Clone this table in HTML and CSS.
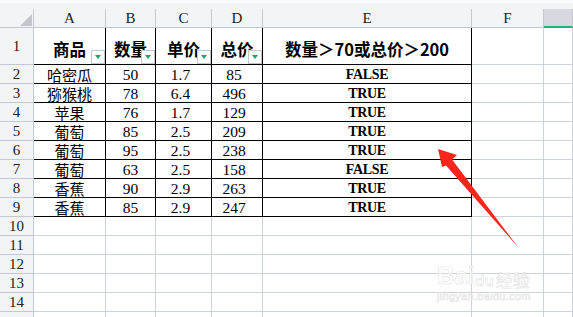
FILE: index.html
```html
<!DOCTYPE html>
<html>
<head>
<meta charset="utf-8">
<link rel="stylesheet" href="styles.css">
</head>
<body>
<div class="sheet">
  <div class="topbar"><div class="topsel"></div></div>
  <div class="grid">
    <div class="c hd corner"><span class="tri"></span></div>
    <div class="c hd col">A</div>
    <div class="c hd col">B</div>
    <div class="c hd col">C</div>
    <div class="c hd col">D</div>
    <div class="c hd col">E</div>
    <div class="c hd col">F</div>
    <div class="c hd col sel"></div>

    <div class="c hd row">1</div>
    <div class="c t th">商品<span class="flt"></span></div>
    <div class="c t th">数量<span class="flt"></span></div>
    <div class="c t th">单价<span class="flt"></span></div>
    <div class="c t th">总价<span class="flt"></span></div>
    <div class="c t th">数量＞70或总价＞200</div>
    <div class="c"></div>
    <div class="c"></div>

    <div class="c hd row">2</div>
    <div class="c t zh">哈密瓜</div><div class="c t num">50</div><div class="c t num off">1.7</div><div class="c t num off">85</div><div class="c t bool">FALSE</div><div class="c"></div><div class="c"></div>
    <div class="c hd row">3</div>
    <div class="c t zh">猕猴桃</div><div class="c t num">78</div><div class="c t num off">6.4</div><div class="c t num off">496</div><div class="c t bool">TRUE</div><div class="c"></div><div class="c"></div>
    <div class="c hd row">4</div>
    <div class="c t zh">苹果</div><div class="c t num">76</div><div class="c t num off">1.7</div><div class="c t num off">129</div><div class="c t bool">TRUE</div><div class="c"></div><div class="c"></div>
    <div class="c hd row">5</div>
    <div class="c t zh">葡萄</div><div class="c t num">85</div><div class="c t num off">2.5</div><div class="c t num off">209</div><div class="c t bool">TRUE</div><div class="c"></div><div class="c"></div>
    <div class="c hd row">6</div>
    <div class="c t zh">葡萄</div><div class="c t num">95</div><div class="c t num off">2.5</div><div class="c t num off">238</div><div class="c t bool">TRUE</div><div class="c"></div><div class="c"></div>
    <div class="c hd row">7</div>
    <div class="c t zh">葡萄</div><div class="c t num">63</div><div class="c t num off">2.5</div><div class="c t num off">158</div><div class="c t bool">FALSE</div><div class="c"></div><div class="c"></div>
    <div class="c hd row">8</div>
    <div class="c t zh">香蕉</div><div class="c t num">90</div><div class="c t num off">2.9</div><div class="c t num off">263</div><div class="c t bool">TRUE</div><div class="c"></div><div class="c"></div>
    <div class="c hd row">9</div>
    <div class="c t zh">香蕉</div><div class="c t num">85</div><div class="c t num off">2.9</div><div class="c t num off">247</div><div class="c t bool">TRUE</div><div class="c"></div><div class="c"></div>

    <div class="c hd row">10</div><div class="c"></div><div class="c"></div><div class="c"></div><div class="c"></div><div class="c"></div><div class="c"></div><div class="c"></div>
    <div class="c hd row">11</div><div class="c"></div><div class="c"></div><div class="c"></div><div class="c"></div><div class="c"></div><div class="c"></div><div class="c"></div>
    <div class="c hd row">12</div><div class="c"></div><div class="c"></div><div class="c"></div><div class="c"></div><div class="c"></div><div class="c"></div><div class="c"></div>
    <div class="c hd row">13</div><div class="c"></div><div class="c"></div><div class="c"></div><div class="c"></div><div class="c"></div><div class="c"></div><div class="c"></div>
    <div class="c hd row">14</div><div class="c"></div><div class="c"></div><div class="c"></div><div class="c"></div><div class="c"></div><div class="c"></div><div class="c"></div>
    <div class="c hd row"></div><div class="c"></div><div class="c"></div><div class="c"></div><div class="c"></div><div class="c"></div><div class="c"></div><div class="c"></div>
  </div>

  <svg class="arrow" width="573" height="317" viewBox="0 0 573 317">
    <polygon points="438,149 457,155 452,159.5 518,247 446,165.5 442,167" fill="#f7261b"/>
  </svg>

  <div class="wm">
    <div class="wm-top"><span class="wm-bai">Bai</span><span class="wm-du">du</span><span class="wm-jy">经验</span></div>
    <div class="wm-url">jingyan.baidu.com</div>
  </div>
</div>
</body>
</html>
```

FILE: styles.css
```css
* { box-sizing: border-box; }
html, body { margin: 0; padding: 0; }
body { width: 573px; height: 317px; overflow: hidden; background: #fff; }

.sheet { position: relative; width: 573px; height: 317px; overflow: hidden; }

.topbar {
  height: 9px;
  background: #f3f4f6;
  border-top: 3px solid #fbfbfc;
  display: flex;
  justify-content: flex-end;
}
.topsel { width: 29px; }

.grid {
  display: grid;
  grid-template-columns: 34px 72px 50px 56px 51px 209px 72px 1fr;
  grid-template-rows: 19px 37px repeat(13, 19px) 19px;
}

.c {
  border-right: 1px solid #cdd1da;
  border-bottom: 1px solid #cdd1da;
  display: flex;
  align-items: center;
  justify-content: center;
  white-space: nowrap;
  color: #000;
  position: relative;
}

.hd {
  background: #f3f4f6;
  border-color: #c3c8d3;
  color: #222;
  font-family: "Liberation Serif", serif;
  font-size: 15px;
}
.col { padding-top: 1px; }
.sel { background: #d6d9df; border-bottom: 2px solid #1fb27a; }
.row { padding-top: 1px; }

.corner { justify-content: flex-end; align-items: flex-end; padding: 0 1px 1px 0; }
.tri {
  width: 12px; height: 12px;
  background: #c2c5cc;
  clip-path: polygon(100% 0, 100% 100%, 0 100%);
}

.t { border-right-color: #000; border-bottom-color: #000; }

.th {
  font-family: "Noto Sans CJK SC", sans-serif;
  font-weight: 700;
  font-size: 16.5px;
  padding-top: 5px;
}

.flt {
  position: absolute;
  right: 0;
  bottom: 0;
  width: 14px;
  height: 14px;
  background: #fdfdfd;
  border: 1px solid #c4c7cc;
}
.flt::after {
  content: "";
  position: absolute;
  left: 3px;
  top: 4px;
  width: 0; height: 0;
  border-left: 3.5px solid transparent;
  border-right: 3.5px solid transparent;
  border-top: 4px solid #18a866;
}

.zh {
  font-family: "Noto Sans CJK SC", sans-serif;
  font-size: 15px;
  font-weight: 400;
  line-height: 1;
}
.num {
  font-family: "Liberation Serif", serif;
  font-size: 15.5px;
  padding-top: 1px;
}
.off { padding-right: 6px; }
.bool {
  font-family: "Liberation Serif", serif;
  font-size: 14px;
  font-weight: 700;
  letter-spacing: -0.3px;
  padding-top: 1px;
}

.arrow { position: absolute; left: 0; top: 0; pointer-events: none; }

.wm {
  position: absolute;
  left: 437px;
  top: 262px;
  width: 110px;
  color: rgba(255,255,255,0.6);
  -webkit-text-stroke: 0.6px #e4e4e4;
  font-family: "Liberation Sans", sans-serif;
}
.wm-top { display: flex; align-items: flex-end; height: 26px; }
.wm-bai { font-size: 24px; font-weight: 700; line-height: 1; }
.wm-du { font-size: 15px; font-weight: 700; line-height: 1; margin-left: 1px; }
.wm-jy { font-family: "Noto Sans CJK SC", sans-serif; font-size: 17px; line-height: 1; margin-left: 2px; }
.wm-url { font-size: 11px; letter-spacing: 0.3px; margin-top: 2px; }
```
